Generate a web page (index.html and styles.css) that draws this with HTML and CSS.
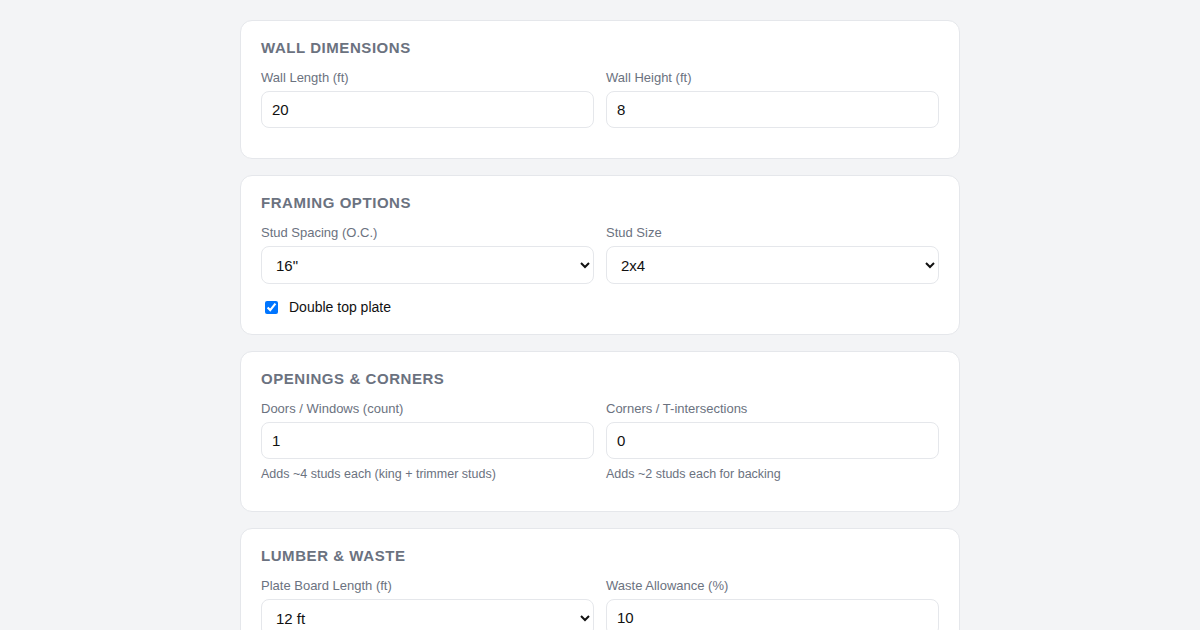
FILE: index.html
```html
<!DOCTYPE html>
<html lang="en">
<head>
<meta charset="utf-8">
<title>Wall Framing Calculator</title>
<link rel="stylesheet" href="styles.css">
</head>
<body>
<main class="wrap">
  <section class="card">
    <h2 class="card-title">Wall Dimensions</h2>
    <div class="grid">
      <div class="field">
        <label class="label">Wall Length (ft)</label>
        <input class="control" type="number" value="20">
      </div>
      <div class="field">
        <label class="label">Wall Height (ft)</label>
        <input class="control" type="number" value="8">
      </div>
    </div>
  </section>

  <section class="card">
    <h2 class="card-title">Framing Options</h2>
    <div class="grid">
      <div class="field">
        <label class="label">Stud Spacing (O.C.)</label>
        <select class="control select">
          <option>16"</option>
          <option>24"</option>
        </select>
      </div>
      <div class="field">
        <label class="label">Stud Size</label>
        <select class="control select">
          <option>2x4</option>
          <option>2x6</option>
        </select>
      </div>
    </div>
    <label class="check">
      <input type="checkbox" checked>
      <span>Double top plate</span>
    </label>
  </section>

  <section class="card">
    <h2 class="card-title">Openings &amp; Corners</h2>
    <div class="grid">
      <div class="field field-hinted">
        <label class="label">Doors / Windows (count)</label>
        <input class="control" type="number" value="1">
        <div class="hint">Adds ~4 studs each (king + trimmer studs)</div>
      </div>
      <div class="field field-hinted">
        <label class="label">Corners / T-intersections</label>
        <input class="control" type="number" value="0">
        <div class="hint">Adds ~2 studs each for backing</div>
      </div>
    </div>
  </section>

  <section class="card">
    <h2 class="card-title">Lumber &amp; Waste</h2>
    <div class="grid">
      <div class="field">
        <label class="label">Plate Board Length (ft)</label>
        <select class="control select">
          <option>12 ft</option>
          <option>8 ft</option>
          <option>16 ft</option>
        </select>
      </div>
      <div class="field">
        <label class="label">Waste Allowance (%)</label>
        <input class="control" type="number" value="10">
      </div>
    </div>
  </section>
</main>
</body>
</html>
```

FILE: styles.css
```css
* { box-sizing: border-box; }

html, body {
  margin: 0;
  padding: 0;
  background: #f3f4f6;
  font-family: "Liberation Sans", Arial, sans-serif;
  color: #111827;
}

.wrap {
  width: 720px;
  margin: 20px auto;
  display: flex;
  flex-direction: column;
  gap: 16px;
}

.card {
  background: #ffffff;
  border: 1px solid #e5e7eb;
  border-radius: 12px;
  padding: 18px 20px 20px;
}

.card-title {
  margin: 0 0 13px;
  font-size: 15px;
  line-height: 18px;
  font-weight: 700;
  letter-spacing: 0.56px;
  text-transform: uppercase;
  color: #6b7280;
}

.grid {
  display: grid;
  grid-template-columns: 1fr 1fr;
  gap: 12px;
}

.field {
  display: flex;
  flex-direction: column;
  margin-bottom: 10px;
}

.field-hinted {
  margin-bottom: 9px;
}

.label {
  font-size: 13px;
  line-height: 16px;
  color: #6b7280;
  margin-bottom: 5px;
}

.control {
  width: 100%;
  height: 37px;
  font-family: inherit;
  font-size: 15px;
  color: #111;
  background: #fff;
  border: 1px solid #e5e7eb;
  border-radius: 8px;
  padding: 9px 10px;
  outline: none;
}

.select {
  height: 38px;
  padding: 9px 6px 9px 10px;
}

.hint {
  margin-top: 7px;
  font-size: 12.5px;
  line-height: 16px;
  color: #6b7280;
}

.check {
  display: flex;
  align-items: center;
  gap: 8px;
  margin-top: 5px;
  margin-bottom: -1px;
  font-size: 14px;
  line-height: 16px;
  color: #111;
}

.check input {
  margin: 0 3px 0 4px;
  width: 13px;
  height: 13px;
}
```
